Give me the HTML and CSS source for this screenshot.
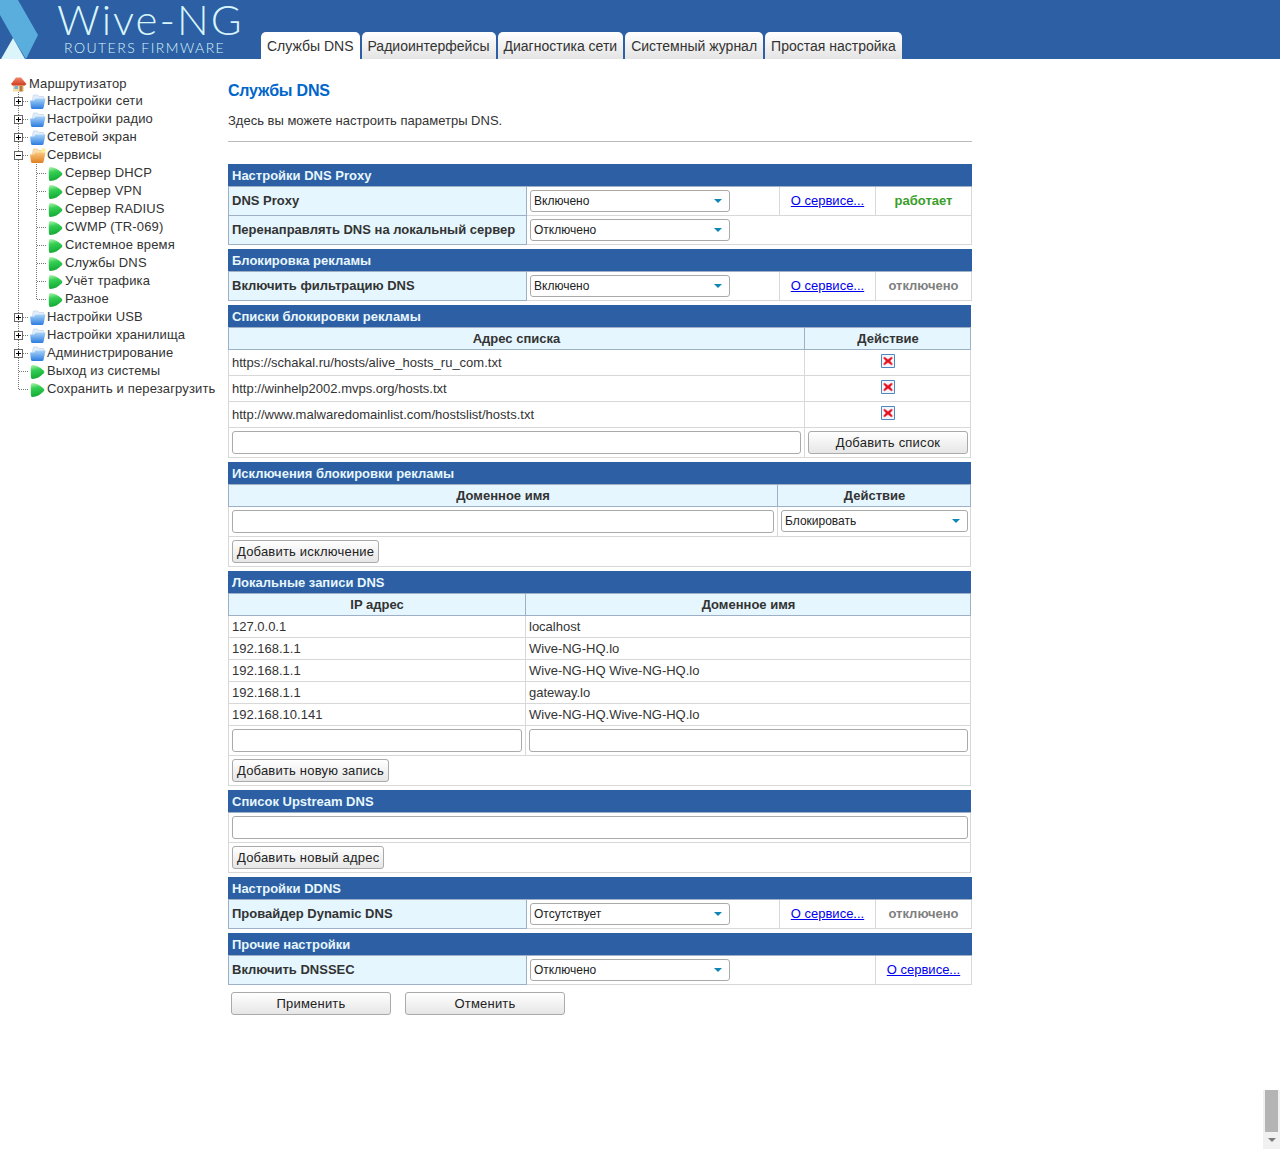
FILE: index.html
```html
<!DOCTYPE html>
<html lang="ru">
<head>
<meta charset="utf-8">
<title>Wive-NG</title>
<link rel="stylesheet" href="styles.css">
</head>
<body>
<svg class="defs" width="0" height="0">
  <defs>
    <linearGradient id="gf" x1="0" y1="0" x2="0" y2="1"><stop offset="0" stop-color="#a8d4f8"/><stop offset="1" stop-color="#2a7be0"/></linearGradient>
    <linearGradient id="go" x1="0" y1="0" x2="0" y2="1"><stop offset="0" stop-color="#fbc67e"/><stop offset="1" stop-color="#de8020"/></linearGradient>
    <linearGradient id="gl" x1="0" y1="0" x2="0.2" y2="1"><stop offset="0" stop-color="#b5f5b0"/><stop offset=".4" stop-color="#35d055"/><stop offset="1" stop-color="#14aa35"/></linearGradient>
    <linearGradient id="gr" x1="0" y1="0" x2="0" y2="1"><stop offset="0" stop-color="#f0876a"/><stop offset="1" stop-color="#cf3a20"/></linearGradient>
    <symbol id="t-line" viewBox="0 0 18 18"><path d="M8.500 0V18" stroke="#777" stroke-dasharray="1 1" fill="none"/></symbol>
    <symbol id="t-join" viewBox="0 0 18 18"><path d="M8.500 0V18M9 9.500H18" stroke="#777" stroke-dasharray="1 1" fill="none"/></symbol>
    <symbol id="t-end" viewBox="0 0 18 18"><path d="M8.500 0V9.500H18" stroke="#777" stroke-dasharray="1 1" fill="none"/></symbol>
    <symbol id="t-plus" viewBox="0 0 18 18"><path d="M8.500 0V18M13 9.500H18" stroke="#777" stroke-dasharray="1 1" fill="none"/><rect x="4.500" y="5.500" width="8" height="8" fill="#fff" stroke="#666"/><path d="M6 9.500H11M8.500 7V12" stroke="#000"/></symbol>
    <symbol id="t-minus" viewBox="0 0 18 18"><path d="M8.500 0V18M13 9.500H18" stroke="#777" stroke-dasharray="1 1" fill="none"/><rect x="4.500" y="5.500" width="8" height="8" fill="#fff" stroke="#666"/><path d="M6 9.500H11" stroke="#000"/></symbol>
    <symbol id="i-house" viewBox="0 0 18 18"><path d="M3 8.500h11v8H3z" fill="#f4dba0"/><path d="M9.500 11h3v5.500h-3z" fill="#b07a40"/><path d="M4.500 11H8v3H4.500z" fill="#7ab0e0"/><path d="M1 9 6 2.500h5L16.500 9 15 10.500H2.500z" fill="url(#gr)"/></symbol>
    <symbol id="i-folder" viewBox="0 0 18 18"><path d="M4 10 5.500 3h4l1.500 1.500h4.500L16.500 9z" fill="#e3eefa" stroke="#b5cfe9" stroke-width=".6"/><path d="M2 8.500h4Q7 6.500 8 6.500h9.500L15.500 16q-.2 1-1.500 1H4.500Q3.300 17 3 16z" fill="url(#gf)"/></symbol>
    <symbol id="i-open" viewBox="0 0 18 18"><path d="M4 10 5.500 3h4l1.500 1.500h4.500L16.500 9z" fill="#f9dfb0" stroke="#e6bf80" stroke-width=".6"/><path d="M2 8.500h4Q7 6.500 8 6.500h9.500L15.500 16q-.2 1-1.500 1H4.500Q3.300 17 3 16z" fill="url(#go)"/><circle cx="15.500" cy="4.500" r="2.200" fill="#ffee90"/></symbol>
    <symbol id="i-leaf" viewBox="0 0 18 18"><path d="M4.500 3C8.500 3 12.500 5.500 15.800 8.800Q17 10 15.800 11.200C12.500 14.500 8.500 17 4.500 17 3 17 2.800 15.500 2.800 10S3 3 4.500 3z" fill="url(#gl)"/></symbol>
    <symbol id="i-del" viewBox="0 0 14 14"><path d="M.5.500h13v13H.500z" fill="#f0f6fc" stroke="#4f86bd"/><path d="M3.500 3 7 5.500 10.500 3l1 1L9 7l2.500 3-1 1L7 8.500 3.500 11l-1-1L5 7 2.500 4z" fill="#e3101c" stroke="#f0505a" stroke-width=".6"/></symbol>
  </defs>
</svg>

<header class="top">
  <div class="logo">
    <svg class="logo-mark" viewBox="0 0 40 59" width="40" height="59"><path d="M0 0H18L38 35 26 59 13 38 0 15z" fill="#5aaede"/><path d="M13 38 25 59H1z" fill="#dcf5fb"/></svg>
    <div class="logo-text">
      <div class="logo-name">Wive-NG</div>
      <div class="logo-sub">ROUTERS FIRMWARE</div>
    </div>
  </div>
  <nav class="tabs">
    <a class="tab tab-on">Службы DNS</a>
    <a class="tab">Радиоинтерфейсы</a>
    <a class="tab">Диагностика сети</a>
    <a class="tab">Системный журнал</a>
    <a class="tab">Простая настройка</a>
  </nav>
</header>

<div class="page">
  <aside class="tree">
    <div class="row row-first"><svg class="c"><use href="#i-house"/></svg><span>Маршрутизатор</span></div>
    <div class="row"><svg class="c"><use href="#t-plus"/></svg><svg class="c"><use href="#i-folder"/></svg><span>Настройки сети</span></div>
    <div class="row"><svg class="c"><use href="#t-plus"/></svg><svg class="c"><use href="#i-folder"/></svg><span>Настройки радио</span></div>
    <div class="row"><svg class="c"><use href="#t-plus"/></svg><svg class="c"><use href="#i-folder"/></svg><span>Сетевой экран</span></div>
    <div class="row"><svg class="c"><use href="#t-minus"/></svg><svg class="c"><use href="#i-open"/></svg><span>Сервисы</span></div>
    <div class="row"><svg class="c"><use href="#t-line"/></svg><svg class="c"><use href="#t-join"/></svg><svg class="c"><use href="#i-leaf"/></svg><span>Сервер DHCP</span></div>
    <div class="row"><svg class="c"><use href="#t-line"/></svg><svg class="c"><use href="#t-join"/></svg><svg class="c"><use href="#i-leaf"/></svg><span>Сервер VPN</span></div>
    <div class="row"><svg class="c"><use href="#t-line"/></svg><svg class="c"><use href="#t-join"/></svg><svg class="c"><use href="#i-leaf"/></svg><span>Сервер RADIUS</span></div>
    <div class="row"><svg class="c"><use href="#t-line"/></svg><svg class="c"><use href="#t-join"/></svg><svg class="c"><use href="#i-leaf"/></svg><span>CWMP (TR-069)</span></div>
    <div class="row"><svg class="c"><use href="#t-line"/></svg><svg class="c"><use href="#t-join"/></svg><svg class="c"><use href="#i-leaf"/></svg><span>Системное время</span></div>
    <div class="row"><svg class="c"><use href="#t-line"/></svg><svg class="c"><use href="#t-join"/></svg><svg class="c"><use href="#i-leaf"/></svg><span>Службы DNS</span></div>
    <div class="row"><svg class="c"><use href="#t-line"/></svg><svg class="c"><use href="#t-join"/></svg><svg class="c"><use href="#i-leaf"/></svg><span>Учёт трафика</span></div>
    <div class="row"><svg class="c"><use href="#t-line"/></svg><svg class="c"><use href="#t-end"/></svg><svg class="c"><use href="#i-leaf"/></svg><span>Разное</span></div>
    <div class="row"><svg class="c"><use href="#t-plus"/></svg><svg class="c"><use href="#i-folder"/></svg><span>Настройки USB</span></div>
    <div class="row"><svg class="c"><use href="#t-plus"/></svg><svg class="c"><use href="#i-folder"/></svg><span>Настройки хранилища</span></div>
    <div class="row"><svg class="c"><use href="#t-plus"/></svg><svg class="c"><use href="#i-folder"/></svg><span>Администрирование</span></div>
    <div class="row"><svg class="c"><use href="#t-join"/></svg><svg class="c"><use href="#i-leaf"/></svg><span>Выход из системы</span></div>
    <div class="row"><svg class="c"><use href="#t-end"/></svg><svg class="c"><use href="#i-leaf"/></svg><span>Сохранить и перезагрузить</span></div>
  </aside>

  <main class="content">
    <h1 class="title">Службы DNS</h1>
    <p class="intro">Здесь вы можете настроить параметры DNS.</p>
    <hr class="rule">

    <table class="form">
      <colgroup><col class="w-label"><col class="w-sel"><col class="w-link"><col class="w-stat"></colgroup>
      <tr><th class="cap" colspan="4">Настройки DNS Proxy</th></tr>
      <tr class="r29"><td class="lab">DNS Proxy</td><td><span class="sel"><select><option>Включено</option></select></span></td><td class="ctr"><a class="lnk" href="#">О сервисе...</a></td><td class="ctr on">работает</td></tr>
      <tr class="r29"><td class="lab">Перенаправлять DNS на локальный сервер</td><td colspan="3"><span class="sel"><select><option>Отключено</option></select></span></td></tr>
    </table>

    <table class="form">
      <colgroup><col class="w-label"><col class="w-sel"><col class="w-link"><col class="w-stat"></colgroup>
      <tr><th class="cap" colspan="4">Блокировка рекламы</th></tr>
      <tr class="r29"><td class="lab">Включить фильтрацию DNS</td><td><span class="sel"><select><option>Включено</option></select></span></td><td class="ctr"><a class="lnk" href="#">О сервисе...</a></td><td class="ctr off">отключено</td></tr>
    </table>

    <table class="form">
      <colgroup><col class="w-addr"><col></colgroup>
      <tr><th class="cap" colspan="2">Списки блокировки рекламы</th></tr>
      <tr><th class="hd">Адрес списка</th><th class="hd">Действие</th></tr>
      <tr class="r26"><td>https://schakal.ru/hosts/alive_hosts_ru_com.txt</td><td class="del-cell"><svg class="del"><use href="#i-del"/></svg></td></tr>
      <tr class="r26"><td>http://winhelp2002.mvps.org/hosts.txt</td><td class="del-cell"><svg class="del"><use href="#i-del"/></svg></td></tr>
      <tr class="r26"><td>http://www.malwaredomainlist.com/hostslist/hosts.txt</td><td class="del-cell"><svg class="del"><use href="#i-del"/></svg></td></tr>
      <tr class="r30"><td><input class="inp" type="text"></td><td class="ctr"><button class="btn btn-fill" type="button">Добавить список</button></td></tr>
    </table>

    <table class="form">
      <colgroup><col class="w-dom"><col></colgroup>
      <tr><th class="cap" colspan="2">Исключения блокировки рекламы</th></tr>
      <tr><th class="hd">Доменное имя</th><th class="hd">Действие</th></tr>
      <tr class="r30"><td><input class="inp" type="text"></td><td><span class="sel sel-fill"><select><option>Блокировать</option></select></span></td></tr>
      <tr class="r30"><td colspan="2"><button class="btn" type="button">Добавить исключение</button></td></tr>
    </table>

    <table class="form">
      <colgroup><col class="w-ip"><col></colgroup>
      <tr><th class="cap" colspan="2">Локальные записи DNS</th></tr>
      <tr><th class="hd">IP адрес</th><th class="hd">Доменное имя</th></tr>
      <tr class="r22"><td>127.0.0.1</td><td>localhost</td></tr>
      <tr class="r22"><td>192.168.1.1</td><td>Wive-NG-HQ.lo</td></tr>
      <tr class="r22"><td>192.168.1.1</td><td>Wive-NG-HQ Wive-NG-HQ.lo</td></tr>
      <tr class="r22"><td>192.168.1.1</td><td>gateway.lo</td></tr>
      <tr class="r22"><td>192.168.10.141</td><td>Wive-NG-HQ.Wive-NG-HQ.lo</td></tr>
      <tr class="r30"><td><input class="inp" type="text"></td><td><input class="inp" type="text"></td></tr>
      <tr class="r30"><td colspan="2"><button class="btn" type="button">Добавить новую запись</button></td></tr>
    </table>

    <table class="form">
      <tr><th class="cap">Список Upstream DNS</th></tr>
      <tr class="r30"><td><input class="inp" type="text"></td></tr>
      <tr class="r30"><td><button class="btn" type="button">Добавить новый адрес</button></td></tr>
    </table>

    <table class="form">
      <colgroup><col class="w-label"><col class="w-sel"><col class="w-link"><col class="w-stat"></colgroup>
      <tr><th class="cap" colspan="4">Настройки DDNS</th></tr>
      <tr class="r29"><td class="lab">Провайдер Dynamic DNS</td><td><span class="sel"><select><option>Отсутствует</option></select></span></td><td class="ctr"><a class="lnk" href="#">О сервисе...</a></td><td class="ctr off">отключено</td></tr>
    </table>

    <table class="form">
      <colgroup><col class="w-label"><col class="w-sel2"><col class="w-stat"></colgroup>
      <tr><th class="cap" colspan="3">Прочие настройки</th></tr>
      <tr class="r29"><td class="lab">Включить DNSSEC</td><td><span class="sel"><select><option>Отключено</option></select></span></td><td class="ctr"><a class="lnk" href="#">О сервисе...</a></td></tr>
    </table>

    <div class="actions">
      <button class="btn btn-wide" type="button">Применить</button>
      <button class="btn btn-wide" type="button">Отменить</button>
    </div>
  </main>
</div>

<div class="scroll"><div class="scroll-thumb"></div><div class="scroll-arrow"></div></div>
</body>
</html>
```

FILE: styles.css
```css
* { box-sizing: border-box; }
html, body { margin: 0; padding: 0; }
body {
  height: 1149px;
  overflow: hidden;
  background: #fff;
  color: #333;
  font: 13px/18px "Liberation Sans", Arial, sans-serif;
}
.defs { position: absolute; }

.top {
  height: 59px;
  background: #2c5fa3;
  display: flex;
  overflow: hidden;
}
.logo { width: 261px; display: flex; flex: none; }
.logo-mark { display: block; flex: none; }
.logo-text { margin-left: 17px; color: #d8f5fb; }
.logo-name {
  font: 300 42px/38px Lato, "Open Sans", sans-serif;
  letter-spacing: 2px;
  white-space: nowrap;
}
.logo-sub {
  font: 300 14px/14px Lato, "Open Sans", sans-serif;
  letter-spacing: 1.45px;
  margin: 3px 0 0 7px;
  white-space: nowrap;
}
.tabs { display: flex; align-items: flex-end; gap: 2px; }
.tab {
  display: block;
  height: 27px;
  padding: 5px 6px 0;
  font-size: 14px;
  line-height: 18px;
  color: #333;
  background: linear-gradient(#fff, #e4e4e4);
  border-radius: 5px 5px 0 0;
  white-space: nowrap;
}
.tab-on { background: #fff; }

.page { display: flex; align-items: flex-start; }
.tree { width: 228px; flex: none; padding: 16px 0 0 10px; }
.row { display: flex; height: 18px; align-items: center; white-space: nowrap; letter-spacing: 0.14px; }
.row-first { height: 17px; }
.row span { margin-left: 1px; }
.c { width: 18px; height: 18px; flex: none; display: block; }

.content { width: 744px; flex: none; }
.title { margin: 23px 0 0; font-size: 16px; line-height: 18px; font-weight: bold; color: #0066cc; letter-spacing: -0.2px; }
.intro { margin: 12px 0 0; font-size: 13px; line-height: 18px; }
.rule { margin: 11px 0 22px; border: 0; border-top: 1px solid #bbb; height: 1px; }

.form {
  width: 743px;
  table-layout: fixed;
  border-collapse: collapse;
  margin: 0 0 4px;
  font-size: 13px;
}
.form td, .form th { border: 1px solid #d8d8d8; padding: 0 3px; line-height: 16px; }
.form .cap {
  height: 22px;
  background: #2c5fa3;
  border: 1px solid #2c5fa3;
  border-bottom-color: #9db0c6;
  color: #e8f7fd;
  font-weight: bold;
  text-align: left;
}
.form .hd {
  height: 22px;
  background: #e5f6fe;
  border: 1px solid #9db0c6;
  font-weight: bold;
  text-align: center;
}
.form .lab {
  background: #e5f6fe;
  border: 1px solid #9db0c6;
  font-weight: bold;
}
.form .hd:last-child, .form .r30 td:last-child { padding-right: 2px; }
.form .del-cell { padding-bottom: 4px; }
.r22 { height: 22px; }
.r26 { height: 26px; }
.r29 { height: 29px; }
.r30 { height: 30px; }
.ctr { text-align: center; }
.on { color: #3a9e2a; font-weight: bold; }
.off { color: #808080; font-weight: bold; }
.lnk { color: #0000ee; text-decoration: underline; }
.w-label { width: 298px; }
.w-sel { width: 253px; }
.w-sel2 { width: 349px; }
.w-link { width: 96px; }
.w-stat { width: 96px; }
.w-addr { width: 576px; }
.w-dom { width: 549px; }
.w-ip { width: 297px; }

.sel { display: inline-block; position: relative; width: 200px; height: 22px; vertical-align: middle; }
.sel-fill { width: 100%; margin-bottom: 2px; }
.sel::after {
  content: "";
  position: absolute;
  right: 8px;
  top: 9px;
  border: 4.500px solid transparent;
  border-top-color: #0e86b5;
  border-bottom: 0;
}
.sel select {
  appearance: none;
  display: block;
  width: 100%;
  height: 22px;
  padding: 0 3px;
  background: #fff;
  border: 1px solid #aaa;
  border-radius: 3px;
  color: #222;
  font: 12px "Liberation Sans", Arial, sans-serif;
}
.inp {
  display: block;
  width: 100%;
  height: 23px;
  padding: 0 3px;
  background: #fff;
  border: 1px solid #aaa;
  border-radius: 3px;
  font: 12px "Liberation Sans", Arial, sans-serif;
}
.btn {
  display: inline-block;
  height: 23px;
  padding: 0 4px;
  background: linear-gradient(#fff, #e6e6e6);
  border: 1px solid #aaa;
  border-radius: 3px;
  color: #222;
  font: 13px "Liberation Sans", Arial, sans-serif;
  letter-spacing: 0.2px;
  vertical-align: middle;
}
.btn-fill { width: 100%; }
.btn-wide { width: 160px; }
.del { width: 14px; height: 14px; display: block; margin: 0 auto; }
.actions { display: flex; gap: 14px; padding: 3px 0 0 3px; }

.scroll {
  position: fixed;
  right: 0;
  bottom: 0;
  width: 17px;
  height: 59px;
  background: #f1f1f1;
}
.scroll-thumb { width: 13px; height: 42px; margin-left: 2px; background: #b4b4b4; }
.scroll-arrow {
  margin: 6px 0 0 5px;
  width: 0;
  height: 0;
  border: 4px solid transparent;
  border-top-color: #7a7a7a;
  border-bottom: 0;
}
```
